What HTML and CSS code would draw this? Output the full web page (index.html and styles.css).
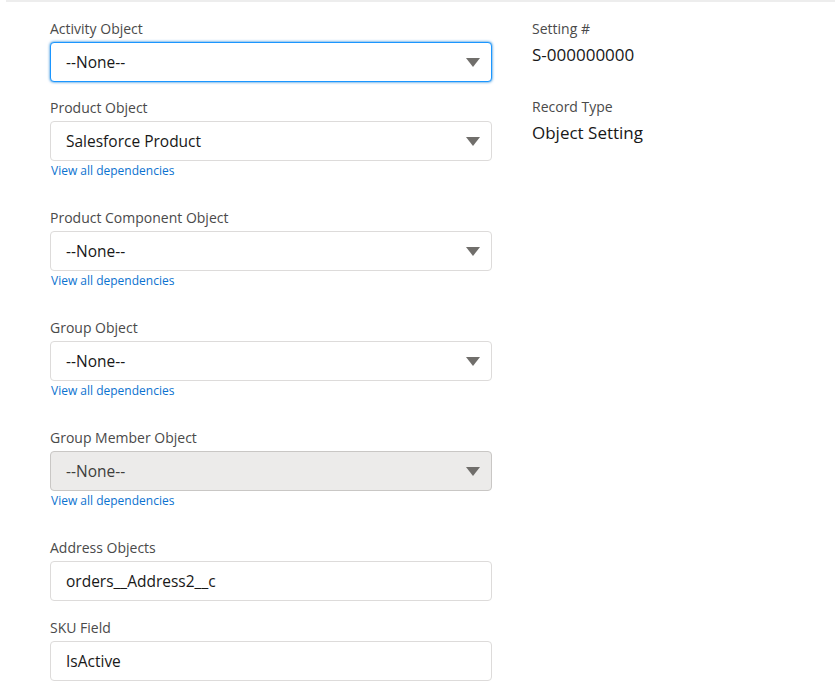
FILE: index.html
```html
<!DOCTYPE html>
<html>
<head>
<meta charset="utf-8">
<link rel="stylesheet" href="styles.css">
</head>
<body>
<div class="topline"></div>
<div class="layout">
  <div class="col-left">
    <div class="field">
      <div class="label">Activity Object</div>
      <div class="select focused"><span>--None--</span><i class="arrow"></i></div>
    </div>
    <div class="field">
      <div class="label">Product Object</div>
      <div class="select"><span>Salesforce Product</span><i class="arrow"></i></div>
      <a class="dep">View all dependencies</a>
    </div>
    <div class="field">
      <div class="label">Product Component Object</div>
      <div class="select"><span>--None--</span><i class="arrow"></i></div>
      <a class="dep">View all dependencies</a>
    </div>
    <div class="field">
      <div class="label">Group Object</div>
      <div class="select"><span>--None--</span><i class="arrow"></i></div>
      <a class="dep">View all dependencies</a>
    </div>
    <div class="field">
      <div class="label">Group Member Object</div>
      <div class="select disabled"><span>--None--</span><i class="arrow"></i></div>
      <a class="dep">View all dependencies</a>
    </div>
    <div class="field field-text">
      <div class="label">Address Objects</div>
      <div class="input">orders__Address2__c</div>
    </div>
    <div class="field">
      <div class="label">SKU Field</div>
      <div class="input">IsActive</div>
    </div>
  </div>
  <div class="col-right">
    <div class="field">
      <div class="label">Setting #</div>
      <div class="value">S-000000000</div>
    </div>
    <div class="field">
      <div class="label">Record Type</div>
      <div class="value">Object Setting</div>
    </div>
  </div>
</div>
</body>
</html>
```
FILE: styles.css
```css
html, body {
  margin: 0;
  padding: 0;
  background: #ffffff;
  font-family: "Open Sans", "Noto Sans", sans-serif;
  color: #181818;
}
.topline {
  height: 2px;
  margin-left: 6px;
  background: #ededed;
}
.layout {
  display: grid;
  grid-template-columns: 442px 1fr;
  column-gap: 40px;
  padding: 17px 0 0 50px;
}
.field {
  margin-bottom: 16px;
}
.field-text {
  margin-bottom: 17px;
}
.label {
  font-size: 14px;
  line-height: 20px;
  color: #4a4a4a;
  margin-bottom: 3px;
}
.select, .input {
  box-sizing: border-box;
  height: 40px;
  border: 1px solid #dddbda;
  border-radius: 4px;
  background: #fff;
  display: flex;
  align-items: center;
  padding: 0 11px 0 15px;
  font-size: 15.5px;
  color: #181818;
}
.select span {
  flex: 1;
}
.select.focused {
  border-color: #1b96ff;
  box-shadow: 0 0 3px #0176d3;
}
.select.disabled {
  background: #ecebea;
  border-color: #c9c7c5;
  color: #3e3e3c;
}
.arrow {
  width: 0;
  height: 0;
  border-left: 7px solid transparent;
  border-right: 7px solid transparent;
  border-top: 9px solid #706e6b;
  margin-top: 1px;
}
.dep {
  display: block;
  font-size: 12px;
  line-height: 20px;
  color: #0b72d0;
  padding-left: 1px;
  padding-bottom: 11px;
  cursor: pointer;
}
.value {
  font-size: 17px;
  line-height: 26px;
  margin-top: 1px;
  color: #181818;
}
.col-right .field {
  margin-bottom: 29px;
}
```
